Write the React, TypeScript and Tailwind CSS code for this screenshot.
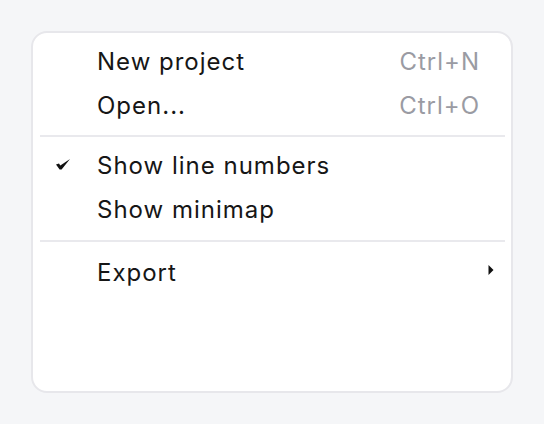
type Item = {
  label: string;
  shortcut?: string;
  checked?: boolean;
  submenu?: boolean;
};

const groups: Item[][] = [
  [
    { label: "New project", shortcut: "Ctrl+N" },
    { label: "Open...", shortcut: "Ctrl+O" },
  ],
  [
    { label: "Show line numbers", checked: true },
    { label: "Show minimap" },
  ],
  [{ label: "Export", submenu: true }],
];

function MenuRow({ item }: { item: Item }) {
  return (
    <div className="flex h-[44px] items-center pr-[11px] text-[24px] tracking-[1px] text-[#161616]">
      <div className="flex w-[57px] shrink-0 items-center pl-[16px]">
        {item.checked && (
          <svg width="14" height="11" viewBox="0 0 14 11" className="mb-[4px]">
            <path d="M0 5.5 L3 4.4 L4.3 6.4 L14 0 L5.6 10.6 L3.6 10.6 Z" fill="#111" />
          </svg>
        )}
      </div>
      <span className="flex-1">{item.label}</span>
      {item.shortcut && (
        <span className="mr-[14px] text-[#9a9ba3]">{item.shortcut}</span>
      )}
      {item.submenu && (
        <svg width="6" height="10" viewBox="0 0 6 10" className="mb-[7px]">
          <path d="M0.5 0 L5.5 5 L0.5 10 Z" fill="#111" />
        </svg>
      )}
    </div>
  );
}

export default function App() {
  return (
    <div
      className="flex min-h-screen flex-col bg-[#f5f6f8] p-[31px]"
      style={{ fontFamily: "Inter, 'Noto Sans', sans-serif" }}
    >
      <div className="flex flex-1 flex-col rounded-[16px] border-2 border-[#e7e7eb] bg-white px-[7px] py-[7px] pr-[6px]">
        <div>
          {groups[0].map((item) => (
            <MenuRow key={item.label} item={item} />
          ))}
        </div>
        <div className="my-[7px] h-[2px] bg-[#e9e9ed]" />
        <div>
          {groups[1].map((item) => (
            <MenuRow key={item.label} item={item} />
          ))}
        </div>
        <div className="mb-[9px] mt-[8px] h-[2px] bg-[#e9e9ed]" />
        <div>
          {groups[2].map((item) => (
            <MenuRow key={item.label} item={item} />
          ))}
        </div>
      </div>
    </div>
  );
}
